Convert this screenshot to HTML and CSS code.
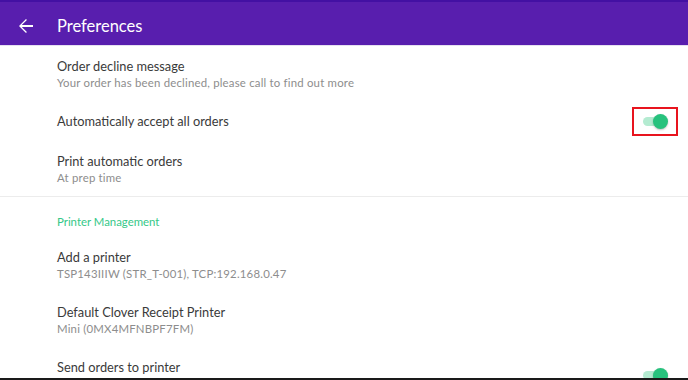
FILE: index.html
```html
<!DOCTYPE html>
<html lang="en">
<head>
    <meta charset="UTF-8">
    <meta name="viewport" content="width=device-width, initial-scale=1.0">
    <title>Preferences</title>
    <link rel="stylesheet" href="styles.css">
</head>
<body>
    <div class="screen">
        <!-- Top app bar -->
        <header class="app-bar">
            <button class="back-btn" aria-label="Back">
                <svg width="16" height="16" viewBox="0 0 16 16">
                    <path d="M15 7H3.8l5.1-5.1L8 1 1 8l7 7 .9-.9L3.8 9H15z" fill="#fff"/>
                </svg>
            </button>
            <h1>Preferences</h1>
        </header>

        <div class="list">
            <div class="row two-line">
                <div class="text">
                    <div class="title">Order decline message</div>
                    <div class="sub">Your order has been declined, please call to find out more</div>
                </div>
            </div>

            <div class="row single">
                <div class="text">
                    <div class="title">Automatically accept all orders</div>
                </div>
                <div class="highlight">
                    <span class="toggle on"></span>
                </div>
            </div>

            <div class="row two-line">
                <div class="text">
                    <div class="title">Print automatic orders</div>
                    <div class="sub">At prep time</div>
                </div>
            </div>

            <div class="divider"></div>

            <div class="section-label">Printer Management</div>

            <div class="row two-line">
                <div class="text">
                    <div class="title">Add a printer</div>
                    <div class="sub">TSP143IIIW (STR_T-001), TCP:192.168.0.47</div>
                </div>
            </div>

            <div class="row two-line">
                <div class="text">
                    <div class="title">Default Clover Receipt Printer</div>
                    <div class="sub">Mini (0MX4MFNBPF7FM)</div>
                </div>
            </div>

            <div class="row two-line">
                <div class="text">
                    <div class="title">Send orders to printer</div>
                    <div class="sub"></div>
                </div>
                <div class="toggle-wrap">
                    <span class="toggle on"></span>
                </div>
            </div>
        </div>
    </div>
</body>
</html>
```

FILE: styles.css
```css
body {
    margin: 0;
    font-family: Lato, "Noto Sans", Arial, sans-serif;
    background: #fff;
}

.screen {
    width: 688px;
    height: 380px;
    box-sizing: border-box;
    border-bottom: 2px solid #1a1a1a;
    overflow: hidden;
    background: #fff;
}

/* Purple header bar */
.app-bar {
    height: 46px;
    box-sizing: border-box;
    padding-top: 5px;
    border-top: 2px solid #4310a3;
    border-bottom: 1px solid #e6e0f0;
    background-color: #581eae;
    display: flex;
    align-items: center;
    color: #fff;
}

.back-btn {
    width: 57px;
    height: 38px;
    padding: 0 0 0 18px;
    background: transparent;
    border: none;
    display: flex;
    align-items: center;
    cursor: pointer;
}

.app-bar h1 {
    margin: 0;
    font-size: 16.5px;
    font-weight: 400;
}

/* Settings rows */
.row {
    display: flex;
    align-items: center;
    padding: 0 20px 0 57px;
}

.row.two-line {
    height: 55px;
    box-sizing: border-box;
    padding-top: 12px;
    padding-bottom: 10px;
}

.row.single {
    height: 40px;
}

.row .text {
    flex: 1;
    align-self: flex-start;
}

.row.single .text {
    align-self: center;
}

.title {
    font-size: 12.8px;
    line-height: 17px;
    color: #3a3a3a;
}

.sub {
    font-size: 11.4px;
    line-height: 16px;
    color: #8d8d8d;
    letter-spacing: 0.2px;
}

.divider {
    height: 1px;
    background: #ececec;
}

.section-label {
    padding: 18px 0 8px 57px;
    font-size: 11.4px;
    line-height: 14px;
    color: #35c888;
}

/* Toggle switch */
.toggle {
    position: relative;
    display: block;
    width: 20px;
    height: 9px;
    border-radius: 5px;
    background: #b4ebd1;
}

.toggle.on::after {
    content: "";
    position: absolute;
    top: -3px;
    left: 10px;
    width: 15px;
    height: 15px;
    border-radius: 50%;
    background: #27c27d;
    box-shadow: 0 1px 2px rgba(0, 0, 0, 0.25);
}

.toggle-wrap {
    padding-right: 5px;
}

/* Red annotation box around the first toggle */
.highlight {
    width: 46px;
    height: 29px;
    margin-right: -10px;
    border: 2px solid #e8141e;
    display: flex;
    align-items: center;
    padding-left: 9px;
    box-sizing: border-box;
}
```
